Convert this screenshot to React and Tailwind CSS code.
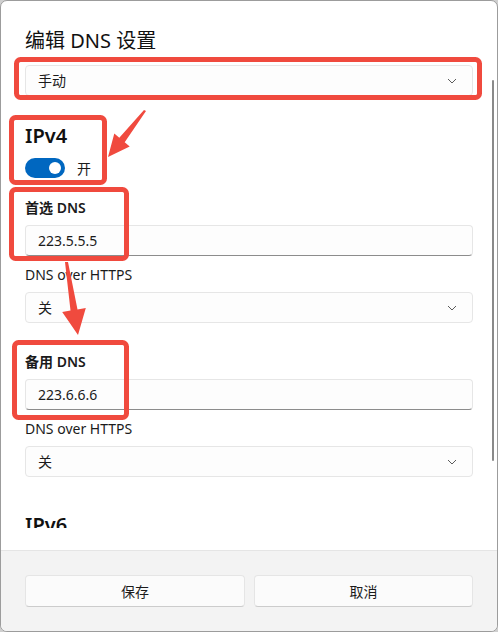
import React from "react";

const font = {
  fontFamily: '"Segoe UI", "Noto Sans", "Noto Sans CJK SC", sans-serif',
};

function Chevron() {
  return (
    <svg width="10" height="6" viewBox="0 0 10 6" className="text-[#5c5c5c]">
      <polyline points="1,1 5,5 9,1" fill="none" stroke="currentColor" strokeWidth="1" />
    </svg>
  );
}

function Select({ value }) {
  return (
    <div className="flex h-[31px] w-[448px] items-center justify-between rounded-[4px] border border-[#e6e6e6] bg-[#fdfdfd] pl-3 pr-[15px] text-[14px] text-[#1b1b1b]">
      <span>{value}</span>
      <Chevron />
    </div>
  );
}

function TextBox({ value }) {
  return (
    <div className="flex h-[31px] w-[448px] items-center rounded-[4px] border border-[#e6e6e6] border-b-[#8c8c8c] bg-[#fdfdfd] pl-3 text-[14px] text-[#1b1b1b]">
      {value}
    </div>
  );
}

function Label({ children, bold }) {
  return (
    <div className={`h-[20px] text-[14px] leading-[20px] text-[#1b1b1b] ${bold ? "font-semibold" : ""}`}>
      {children}
    </div>
  );
}

export default function App() {
  return (
    <div className="relative h-[632px] w-[498px] bg-[#cfcfcf]" style={font}>
      <div className="flex h-[632px] w-[498px] flex-col overflow-hidden rounded-[7px] border border-[#9c9c9c] bg-white">
        <div className="relative h-[549px]">
          <div className="h-[527px] overflow-hidden pl-[24px] pt-[26px]">
            <div className="h-[28px] text-[20px] leading-[28px] text-[#111]">编辑 DNS 设置</div>
            <div className="mt-[10px]">
              <Select value="手动" />
            </div>
            <div className="mt-[26px] h-[28px] text-[20px] font-semibold leading-[28px] text-[#111]">IPv4</div>
            <div className="mt-[8px] flex h-[20px] items-center gap-3">
              <div className="flex h-[20px] w-[40px] items-center justify-end rounded-full bg-[#0067c0] pr-[4px]">
                <div className="h-[12px] w-[12px] rounded-full bg-white" />
              </div>
              <span className="text-[14px] text-[#1b1b1b]">开</span>
            </div>
            <div className="mt-[20px]">
              <Label bold>首选 DNS</Label>
            </div>
            <div className="mt-[7px]">
              <TextBox value="223.5.5.5" />
            </div>
            <div className="mt-[9px]">
              <Label>DNS over HTTPS</Label>
            </div>
            <div className="mt-[7px]">
              <Select value="关" />
            </div>
            <div className="mt-[29px]">
              <Label bold>备用 DNS</Label>
            </div>
            <div className="mt-[7px]">
              <TextBox value="223.6.6.6" />
            </div>
            <div className="mt-[9px]">
              <Label>DNS over HTTPS</Label>
            </div>
            <div className="mt-[7px]">
              <Select value="关" />
            </div>
            <div className="mt-[34px] h-[28px] text-[20px] font-semibold leading-[28px] text-[#111]">IPv6</div>
          </div>
          <div className="absolute left-[491px] top-[79px] h-[381px] w-[2px] rounded-full bg-[#8a8a8a]" />
        </div>
        <div className="flex flex-1 gap-[9px] border-t border-[#e5e5e5] bg-[#f3f3f3] px-[24px] pt-[24px]">
          <button className="h-[32px] w-[220px] rounded-[4px] border border-[#e5e5e5] border-b-[#cccccc] bg-[#fbfbfb] text-[14px] text-[#1b1b1b]">
            保存
          </button>
          <button className="h-[32px] w-[219px] rounded-[4px] border border-[#e5e5e5] border-b-[#cccccc] bg-[#fbfbfb] text-[14px] text-[#1b1b1b]">
            取消
          </button>
        </div>
      </div>

      <svg className="pointer-events-none absolute left-0 top-0" width="498" height="632">
        <g fill="none" stroke="#f04a3e" strokeWidth="5">
          <rect x="16.5" y="59.5" width="463" height="38" rx="4" />
          <rect x="11.5" y="117.5" width="93" height="65" rx="4" />
          <rect x="11.5" y="189.5" width="115" height="69" rx="4" />
          <rect x="14.5" y="342.5" width="112" height="75" rx="4" />
        </g>
        <g fill="#f04a3e">
          <polygon points="146,111 124.7,142.2 129.7,146.4 108,157 114.3,133.6 119.3,137.8 144,110" />
          <polygon points="65,262 70.5,310.6 62.2,312 78,335 85.8,308 77.5,309.4 68,262" />
        </g>
      </svg>
    </div>
  );
}
